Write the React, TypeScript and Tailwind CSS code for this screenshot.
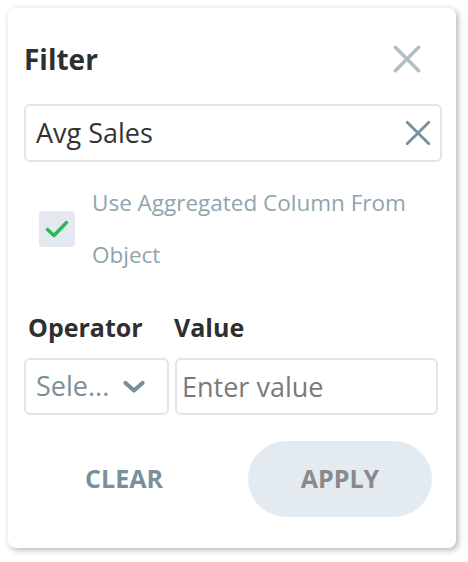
import { useState } from 'react'

const font = { fontFamily: '"Open Sans", "Noto Sans", sans-serif' }

function XIcon({ className, size, stroke }: { className: string; size: number; stroke: number }) {
  return (
    <svg width={size} height={size} viewBox="0 0 24 24" className={className} fill="none">
      <path d="M2 2L22 22M22 2L2 22" stroke="currentColor" strokeWidth={stroke} strokeLinecap="round" />
    </svg>
  )
}

export default function App() {
  const [name, setName] = useState('Avg Sales')
  const [checked, setChecked] = useState(true)
  const [value, setValue] = useState('')

  return (
    <div className="min-h-screen bg-white pt-2 pl-2" style={font}>
      <div className="w-[448px] rounded-lg bg-white px-4 pt-[32px] pb-[31px] shadow-[2px_2px_6px_rgba(0,0,0,0.3)]">
        {/* Header */}
        <div className="flex h-[38px] items-center justify-between">
          <h2 className="text-[28px] font-bold leading-none text-[#2f2f2f]">Filter</h2>
          <button className="mr-[19px] text-[#b0bec5]">
            <XIcon className="block" size={28} stroke={3} />
          </button>
        </div>

        {/* Name input */}
        <div className="-mr-[2px] mt-[26px] flex h-[58px] items-center rounded-md border-2 border-[#e1e5e8] pl-[10px] pr-[9px]">
          <input
            className="min-w-0 flex-1 bg-transparent text-[27px] text-[#333] outline-none"
            value={name}
            onChange={e => setName(e.target.value)}
          />
          <button className="text-[#78909c]" onClick={() => setName('')}>
            <XIcon className="block" size={26} stroke={2.6} />
          </button>
        </div>

        {/* Aggregated checkbox */}
        <div className="mt-[15px] flex items-center">
          <button
            onClick={() => setChecked(c => !c)}
            className="ml-[15px] flex h-[36px] w-[36px] shrink-0 items-center justify-center rounded-[4px] bg-[#e3e9ee]"
          >
            {checked && (
              <svg width="24" height="20" viewBox="0 0 24 20" fill="none">
                <path d="M2.5 10.5L9 16.5L21.5 3.5" stroke="#2db35b" strokeWidth="3.4" strokeLinecap="round" strokeLinejoin="round" />
              </svg>
            )}
          </button>
          <p className="ml-[17px] text-[22.5px] leading-[52px] text-[#90a4ae]">Use Aggregated Column From Object</p>
        </div>

        {/* Operator / Value */}
        <div className="mt-[29px] flex h-[36px] items-center">
          <span className="w-[150px] pl-1 text-[25px] font-bold text-[#2f2f2f]">Operator</span>
          <span className="text-[25px] font-bold text-[#2f2f2f]">Value</span>
        </div>
        <div className="mt-[12px] flex gap-[6px]">
          <button className="flex h-[57px] w-[145px] items-center justify-between rounded-md border-2 border-[#e1e5e8] pl-[10px] pr-[21px]">
            <span className="text-[27px] text-[#78909c]">Sele...</span>
            <svg width="24" height="14" viewBox="0 0 24 14" fill="none">
              <path d="M3.5 3L12 10.5L20.5 3" stroke="#78909c" strokeWidth="4.2" strokeLinecap="round" strokeLinejoin="round" />
            </svg>
          </button>
          <input
            className="h-[57px] w-[263px] rounded-md border-2 border-[#e1e5e8] px-[5px] text-[27px] text-[#333] outline-none placeholder:text-[#7a7a7a]"
            placeholder="Enter value"
            value={value}
            onChange={e => setValue(e.target.value)}
          />
        </div>

        {/* Actions */}
        <div className="mt-[26px] flex items-center justify-between px-2">
          <button className="h-[76px] w-[184px] text-[25px] font-bold text-[#78909c]">CLEAR</button>
          <button className="h-[76px] w-[184px] rounded-full bg-[#e4ebf0] text-[25px] font-bold text-[#8a8a8a]">APPLY</button>
        </div>
      </div>
    </div>
  )
}
